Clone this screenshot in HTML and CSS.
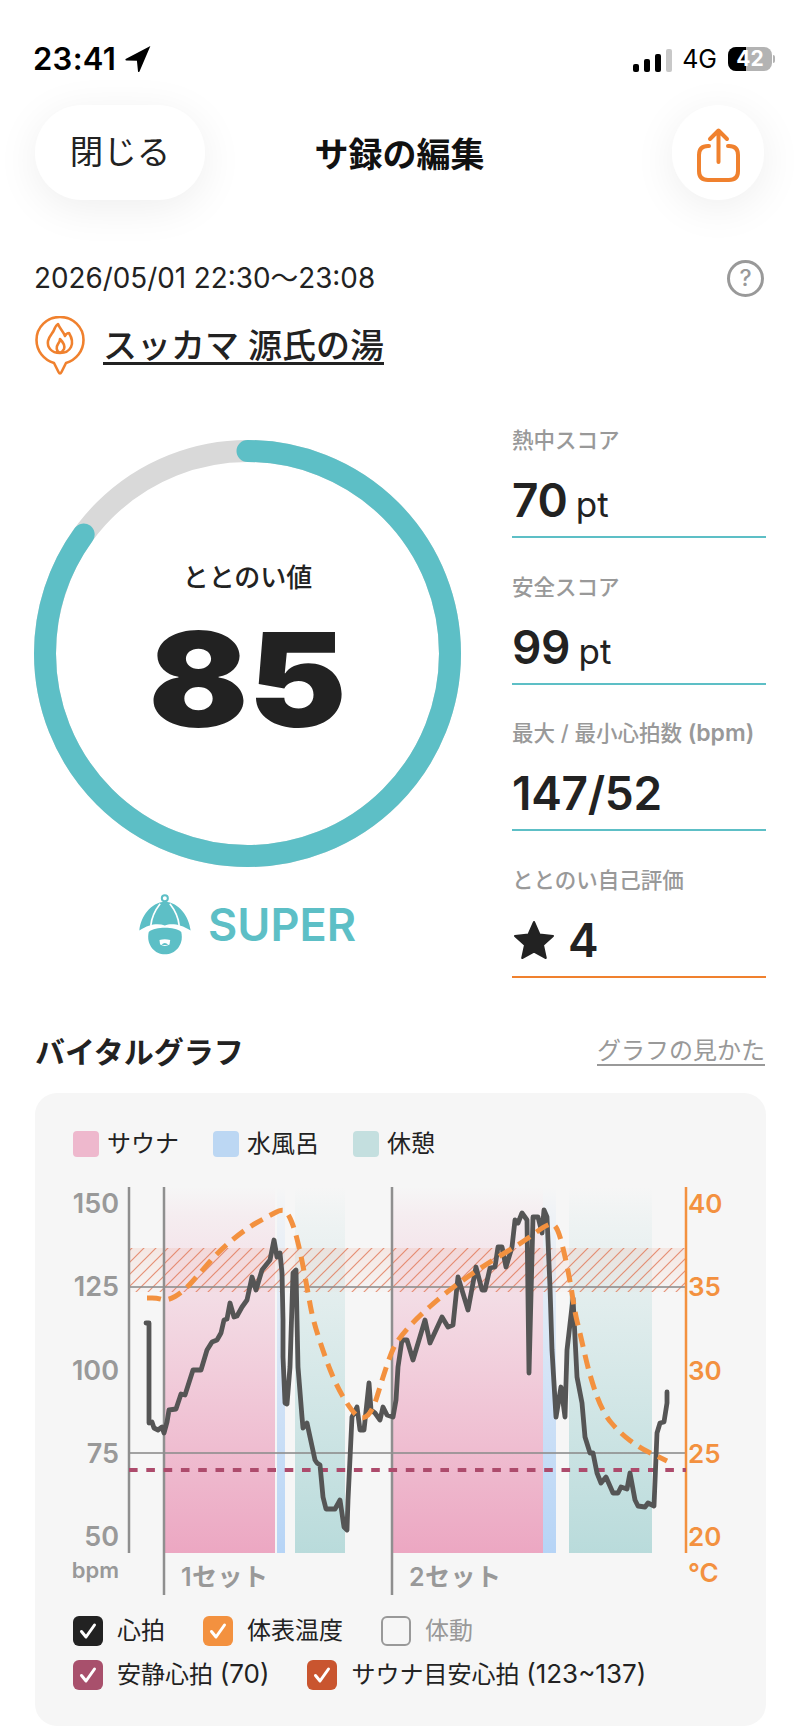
FILE: index.html
```html
<!DOCTYPE html>
<html lang="ja">
<head>
<meta charset="utf-8">
<title>サ録の編集</title>
<link rel="stylesheet" href="styles.css">
</head>
<body>
<div class="page">
  <div class="status">
    <div class="status-left">
      <span class="time">23:41</span>
      <svg class="loc" width="28" height="28" viewBox="0 0 26 26"><path class="fill-ink" d="M24.5 1 L1.5 13 Q0.8 14 2 14.4 L12 14.6 L13 24.6 Q13.6 25.6 14.4 24.6 Z"/></svg>
    </div>
    <div class="status-right">
      <span class="bars"><i class="bar b1"></i><i class="bar b2"></i><i class="bar b3"></i><i class="bar b4"></i></span>
      <span class="net">4G</span>
      <span class="battery"><span class="battery-fill"></span><span class="battery-num">42</span></span>
      <span class="nub"></span>
    </div>
  </div>

  <div class="nav">
    <div class="close-btn">閉じる</div>
    <div class="nav-title">サ録の編集</div>
    <div class="share-btn">
      <svg width="92" height="94" viewBox="0 0 92 94"><path class="stroke-orange" d="M37 41 H36 Q27 41 27 50 V66 Q27 75 36 75 H57 Q66 75 66 66 V50 Q66 41 57 41 H56"/><path class="stroke-orange" d="M46.500 57 V26 M38 34 L46.500 25.500 L55 34"/></svg>
    </div>
  </div>

  <div class="date-row">
    <span class="date">2026/05/01 22:30〜23:08</span>
    <span class="help">?</span>
  </div>

  <div class="venue-row">
    <svg width="50" height="60" viewBox="15 16 50 60"><path class="stroke-pin" d="M34 63 C24 60 16.500 51 16.500 40 C16.500 27 27 17 40 17 C53 17 63.500 27 63.500 40 C63.500 51 56 60 46 63 L41.500 72 Q40 75 38.500 72 Z"/><path class="stroke-pin" d="M40 53 C31 53 27 47 28 41 C29 36 33 33 34 30 C35 28 35 26 38 24 C40 29 43 31 45 36 C46 34 47 33 49 33 C52 38 53 43 51 47 C49 51 45 53 40 53 C36 51 36 47 38 44 C39 43 40 41 40 39 C43 42 45 46 44 49 C43 51 42 52 40 53 Z"/></svg>
    <span class="venue">スッカマ 源氏の湯</span>
  </div>

  <div class="score">
    <div class="score-left">
      <div class="ring">
        <svg class="ring-svg" width="427" height="427" viewBox="0 0 427 427">
          <circle class="ring-bg" cx="213.500" cy="213.500" r="202.500"/>
          <circle class="ring-fg" cx="213.500" cy="213.500" r="202.500" pathLength="100" stroke-dasharray="85 100" transform="rotate(-90 213.500 213.500)"/>
        </svg>
        <div class="ring-text">
          <div class="ring-label">ととのい値</div>
          <div class="ring-value">85</div>
        </div>
      </div>
      <div class="level">
        <svg width="56" height="62" viewBox="50 30 165 185">
          <circle class="knob" cx="132" cy="46" r="9"/>
          <path class="fill-teal" d="M56 142 C60 100 90 58 132 56 C175 58 204 100 209 142 C178 122 150 120 132 127 C112 120 86 122 56 142 Z"/>
          <path class="stroke-white" d="M118 62 C100 85 92 105 90 128 M147 62 C165 85 173 105 175 128"/>
          <path class="fill-teal" d="M84 146 C105 130 160 130 181 146 C190 185 162 213 132 213 C103 213 75 185 84 146 Z"/>
          <path class="fill-white" d="M116 170 Q132 166 148 170 L146 184 Q132 192 118 184 Z"/>
          <path class="fill-teal" d="M122 184 Q132 174 142 184 Q132 187 122 184 Z"/>
        </svg>
        <span class="level-text">SUPER</span>
      </div>
    </div>
    <div class="stats">
      <div class="stat">
        <div class="stat-label">熱中スコア</div>
        <div class="stat-value">70 <span class="unit">pt</span></div>
      </div>
      <div class="stat">
        <div class="stat-label">安全スコア</div>
        <div class="stat-value">99 <span class="unit">pt</span></div>
      </div>
      <div class="stat">
        <div class="stat-label">最大 / 最小心拍数 <span class="stat-label-latin">(bpm)</span></div>
        <div class="stat-value">147/52</div>
      </div>
      <div class="stat stat-self">
        <div class="stat-label">ととのい自己評価</div>
        <div class="stat-value stat-star">
          <svg width="44" height="42" viewBox="0 0 44 42"><path class="fill-ink star" d="M22 3 L27.500 15.500 L41 17 L31 26 L33.800 39 L22 32.500 L10.200 39 L13 26 L3 17 L16.500 15.500 Z"/></svg>
          <span>4</span>
        </div>
      </div>
    </div>
  </div>

  <div class="graph-head">
    <h2 class="graph-title">バイタルグラフ</h2>
    <span class="graph-link">グラフの見かた</span>
  </div>

  <div class="card">
    <div class="legend">
      <span class="legend-item"><i class="swatch sw-sauna"></i>サウナ</span>
      <span class="legend-item"><i class="swatch sw-water"></i>水風呂</span>
      <span class="legend-item"><i class="swatch sw-rest"></i>休憩</span>
    </div>

    <svg class="chart" width="731" height="440" viewBox="35 1170 731 440">
      <defs>
        <linearGradient id="gSauna" x1="0" y1="0" x2="0" y2="1"><stop offset="0" stop-color="#eda9c3" stop-opacity="0"/><stop offset="0.08" stop-color="#eda9c3" stop-opacity="0.12"/><stop offset="1" stop-color="#eca7c2"/></linearGradient>
        <linearGradient id="gWater" x1="0" y1="0" x2="0" y2="1"><stop offset="0" stop-color="#b6d4f6" stop-opacity="0"/><stop offset="0.08" stop-color="#b6d4f6" stop-opacity="0.12"/><stop offset="1" stop-color="#b6d4f6"/></linearGradient>
        <linearGradient id="gRest" x1="0" y1="0" x2="0" y2="1"><stop offset="0" stop-color="#bbdcdc" stop-opacity="0"/><stop offset="0.1" stop-color="#bbdcdc" stop-opacity="0.14"/><stop offset="1" stop-color="#b9dbdb"/></linearGradient>
        <linearGradient id="gZone" x1="0" y1="0" x2="0" y2="1"><stop offset="0" stop-color="#e98a6c" stop-opacity="0.14"/><stop offset="1" stop-color="#e98a6c" stop-opacity="0.02"/></linearGradient>
        <pattern id="hatch" patternUnits="userSpaceOnUse" width="12" height="12"><path class="hatch-line" d="M-3 15 L15 -3 M-3 3 L3 -3 M9 15 L15 9"/></pattern>
      </defs>

      <rect class="band" x="165" y="1187" width="110" height="366" fill="url(#gSauna)"/>
      <rect class="band" x="277" y="1187" width="8" height="366" fill="url(#gWater)"/>
      <rect class="band" x="295" y="1187" width="50" height="366" fill="url(#gRest)"/>
      <rect class="band" x="393" y="1187" width="150" height="366" fill="url(#gSauna)"/>
      <rect class="band" x="543" y="1187" width="13" height="366" fill="url(#gWater)"/>
      <rect class="band" x="569" y="1187" width="83" height="366" fill="url(#gRest)"/>

      <rect x="129" y="1248" width="557" height="44" fill="url(#gZone)"/>
      <rect x="129" y="1248" width="557" height="44" fill="url(#hatch)"/>

      <path class="grid" d="M129 1287 H686 M129 1453 H686"/>
      <path class="axis" d="M129 1187 V1553 M164 1187 V1595 M392 1187 V1595"/>
      <path class="axis-right" d="M686 1187 V1553"/>
      <path class="rest-line" d="M129 1470 H686"/>

      <polyline class="heart" points="146,1323 149,1323 149,1415 149,1423 152,1422 154,1428 158,1430 162,1427 164,1433 167,1422 169,1410 176,1409 181,1394 185,1395 193,1370 201,1370 207,1350 212,1342 217,1340 221,1333 224,1320 227,1319 230,1303 234,1317 237,1316 242,1307 247,1300 252,1277 256,1290 262,1270 270,1260 274,1240 277,1257 280,1253 282,1273 283,1320 283,1357 285,1403 287,1404 290,1367 293,1273 296,1270 297,1320 298,1367 302,1417 303,1428 307,1423 315,1460 317,1463 320,1465 323,1497 326,1509 335,1509 340,1500 344,1527 347,1530 348,1500 352,1417 357,1407 360,1430 364,1430 369,1383 371,1410 375,1413 380,1420 383,1407 387,1415 393,1417 396,1400 398,1367 402,1340 407,1340 413,1360 425,1320 430,1343 442,1317 448,1327 453,1325 458,1277 468,1310 476,1267 482,1290 485,1290 490,1268 495,1267 498,1247 502,1247 506,1267 512,1247 515,1220 518,1223 522,1213 527,1220 529,1373 533,1217 538,1217 542,1233 544,1210 547,1217 550,1287 552,1350 556,1417 561,1387 565,1417 567,1350 573,1298 577,1377 582,1403 585,1437 590,1453 593,1453 597,1473 601,1483 606,1477 613,1493 618,1493 621,1487 627,1489 630,1473 635,1500 638,1506 645,1507 648,1503 654,1506 657,1433 660,1423 664,1422 667,1403 667,1392"/>
      <path class="temp" d="M147 1298 L152 1298 Q157 1298 162 1299.5 Q167 1301 175 1296.5 Q183 1292 191.5 1282.5 Q200 1273 210 1261.5 Q220 1250 233.5 1239 Q247 1228 257 1222.5 Q267 1217 274.5 1213 Q282 1209 285 1211 Q288 1213 291.5 1221.5 Q295 1230 298.5 1245 Q302 1260 305 1276.5 Q308 1293 310.5 1306.5 Q313 1320 319 1338.5 Q325 1357 331 1372 Q337 1387 345 1400 Q353 1413 358 1416.5 Q363 1420 368 1415 Q373 1410 377.5 1395 Q382 1380 387 1365 Q392 1350 396 1343.5 Q400 1337 408.5 1327.5 Q417 1318 430 1306.5 Q443 1295 455 1286 Q467 1277 480 1268.5 Q493 1260 508 1251 Q523 1242 536.5 1232 Q550 1222 553.5 1224.5 Q557 1227 560 1237 Q563 1247 566.5 1263.5 Q570 1280 572.5 1296.5 Q575 1313 577.5 1323 Q580 1333 585 1355 Q590 1377 596.5 1395 Q603 1413 611.5 1423 Q620 1433 630 1440.5 Q640 1448 648.5 1452 Q657 1456 667 1461"/>

      <g class="ticks-left">
        <text x="119" y="1213">150</text>
        <text x="119" y="1296">125</text>
        <text x="119" y="1380">100</text>
        <text x="119" y="1463">75</text>
        <text x="119" y="1546">50</text>
        <text class="bpm" x="119" y="1578">bpm</text>
      </g>
      <g class="ticks-right">
        <text x="688" y="1213">40</text>
        <text x="688" y="1296">35</text>
        <text x="688" y="1380">30</text>
        <text x="688" y="1463">25</text>
        <text x="688" y="1546">20</text>
        <text x="688" y="1582">°C</text>
      </g>
      <g class="set-labels">
        <text x="181" y="1586">1セット</text>
        <text x="409" y="1586">2セット</text>
      </g>
    </svg>

    <div class="checks">
      <div class="check-row">
        <span class="check"><span class="box box-ink"><svg width="30" height="30" viewBox="0 0 30 30"><path class="tick" d="M8.500 15.500 L13 21 L21.500 9"/></svg></span>心拍</span>
        <span class="check"><span class="box box-orange"><svg width="30" height="30" viewBox="0 0 30 30"><path class="tick" d="M8.500 15.500 L13 21 L21.500 9"/></svg></span>体表温度</span>
        <span class="check check-off"><span class="box box-off"></span>体動</span>
      </div>
      <div class="check-row">
        <span class="check"><span class="box box-rose"><svg width="30" height="30" viewBox="0 0 30 30"><path class="tick" d="M8.500 15.500 L13 21 L21.500 9"/></svg></span><span>安静心拍 <span class="latin">(70)</span></span></span>
        <span class="check"><span class="box box-red"><svg width="30" height="30" viewBox="0 0 30 30"><path class="tick" d="M8.500 15.500 L13 21 L21.500 9"/></svg></span><span>サウナ目安心拍 <span class="latin">(123~137)</span></span></span>
      </div>
    </div>
  </div>
</div>
</body>
</html>
```

FILE: styles.css
```css
* { box-sizing: border-box; }
html, body { margin: 0; padding: 0; background: #fff; }
body {
  font-family: Inter, "Noto Sans CJK JP", sans-serif;
  color: #222;
}
.page { width: 800px; height: 1732px; overflow: hidden; display: flex; flex-direction: column; }

/* status bar */
.status { height: 105px; padding: 44px 25px 0 33px; display: flex; justify-content: space-between; align-items: flex-start; }
.status-left, .status-right { display: flex; align-items: center; height: 30px; }
.time { font-size: 31px; font-weight: 600; color: #000; letter-spacing: 0.3px; line-height: 30px; }
.loc { margin-left: 8px; }
.fill-ink { fill: #000; }
.bars { display: flex; align-items: flex-end; gap: 5px; height: 23px; margin-right: 10px; margin-top: 3px; }
.bar { display: block; width: 6px; background: #000; border-radius: 2px; }
.b1 { height: 8px; }
.b2 { height: 13px; }
.b3 { height: 18px; }
.b4 { height: 23px; background: #c8c8c8; }
.net { font-size: 25px; font-weight: 400; color: #000; line-height: 30px; margin-right: 11px; }
.battery { position: relative; width: 44px; height: 24px; border-radius: 8px; background: #b3b3b3; overflow: hidden; display: block; }
.battery-fill { position: absolute; left: 0; top: 0; bottom: 0; width: 18px; background: #000; }
.battery-num { position: absolute; left: 0; right: 0; top: 0; text-align: center; color: #fff; font-size: 21px; font-weight: 700; line-height: 24px; }
.nub { display: block; width: 2px; height: 8px; background: #b3b3b3; margin-left: 1px; border-radius: 0 2px 2px 0; }

/* nav */
.nav { height: 95px; padding: 0 36px 0 35px; display: grid; grid-template-columns: 1fr auto 1fr; align-items: center; }
.close-btn { width: 170px; height: 95px; border-radius: 47px; background: #fff; box-shadow: 0 8px 44px rgba(0,0,0,.07); font-size: 33.500px; line-height: 95px; text-align: center; color: #222; }
.nav-title { font-size: 34px; font-weight: 700; color: #111; }
.share-btn { justify-self: end; width: 92px; height: 95px; border-radius: 47px; background: #fff; box-shadow: 0 8px 44px rgba(0,0,0,.07); }
.stroke-orange { fill: none; stroke: #f0812e; stroke-width: 4; stroke-linecap: round; stroke-linejoin: round; }

/* date */
.date-row { margin-top: 60px; height: 36px; padding: 0 36px 0 35px; display: flex; justify-content: space-between; align-items: center; }
.date { font-size: 27.800px; line-height: 36px; color: #222; margin-left: -1px; }
.help { width: 37px; height: 37px; border: 3px solid #999; border-radius: 50%; color: #999; font-size: 23px; font-weight: 500; line-height: 31px; text-align: center; }

/* venue */
.venue-row { margin-top: 20px; height: 59px; padding-left: 35px; display: flex; align-items: flex-start; gap: 18px; }
.stroke-pin { fill: none; stroke: #f0812e; stroke-width: 2.6; stroke-linejoin: round; }
.venue { font-size: 34px; font-weight: 500; line-height: 40px; margin-top: 10px; color: #222; border-bottom: 3px solid #222; height: 39px; }

/* score */
.score { margin-top: 50px; padding-left: 34px; display: flex; }
.score-left { width: 478px; padding-top: 15px; }
.ring { position: relative; width: 427px; height: 427px; }
.ring-svg { display: block; }
.ring-bg, .ring-fg { fill: none; stroke-width: 22; }
.ring-bg { stroke: #d9d9d9; }
.ring-fg { stroke: #5dbfc6; stroke-linecap: round; }
.ring-text { position: absolute; left: 0; right: 0; top: 120px; text-align: center; }
.ring-label { font-size: 26px; font-weight: 500; line-height: 36px; color: #222; }
.ring-value { font-size: 131px; font-weight: 900; line-height: 130px; margin-top: 19px; color: #222; transform: scaleX(1.125); }
.level { margin-top: 26px; height: 62px; margin-left: 103px; display: flex; align-items: center; gap: 15px; color: #5dbfc6; }
.level-text { font-size: 45px; font-weight: 600; }
.fill-teal { fill: #5dbfc6; }
.fill-white { fill: #fff; }
.knob { fill: none; stroke: #5dbfc6; stroke-width: 6; }
.stroke-white { fill: none; stroke: #fff; stroke-width: 5; }

.stats { width: 254px; display: flex; flex-direction: column; gap: 33.600px; }
.stat { border-bottom: 2px solid #5dbfc6; padding-bottom: 9px; }
.stat-self { border-bottom-color: #f0812e; }
.stat-label { font-size: 21.500px; font-weight: 500; line-height: 30px; color: #999; white-space: nowrap; }
.stat-label-latin { font-size: 23px; font-weight: 600; }
.stat-value { margin-top: 18px; height: 54px; font-size: 46px; font-weight: 600; line-height: 54px; color: #222; white-space: nowrap; letter-spacing: -0.3px; word-spacing: -3px; }
.unit { font-size: 35px; font-weight: 400; letter-spacing: 0; }
.stat-star { display: flex; align-items: center; gap: 12px; }
.star { stroke: #222; stroke-width: 2; stroke-linejoin: round; fill: #222; }

/* graph head */
.graph-head { margin-top: 56px; height: 36px; padding: 0 35px; display: flex; justify-content: space-between; align-items: center; }
.graph-title { margin: 0; font-size: 30px; font-weight: 700; color: #222; line-height: 36px; }
.graph-link { font-size: 24px; color: #999; line-height: 26px; border-bottom: 2px solid #999; }

/* card */
.card { margin: 23px 34px 0 35px; height: 633px; padding: 38px 0 0; border-radius: 22px; background: #f6f6f6; }
.legend { display: flex; padding-left: 38px; height: 26px; gap: 34px; }
.legend-item { display: flex; align-items: center; gap: 8px; font-size: 24px; line-height: 26px; color: #222; }
.swatch { display: block; width: 26px; height: 26px; border-radius: 4px; }
.sw-sauna { background: #eeb8cd; }
.sw-water { background: #bcd7f3; }
.sw-rest { background: #c4dfdf; }

.chart { display: block; margin-top: 13px; }
.band { stroke: none; }
.hatch-line { stroke: #e0714f; stroke-width: 1.200; opacity: .75; fill: none; }
.grid { stroke: #8d8d8d; stroke-width: 2; fill: none; opacity: .8; }
.axis { stroke: #8f8f8f; stroke-width: 2.5; fill: none; }
.axis-right { stroke: #f3913f; stroke-width: 2.5; fill: none; }
.rest-line { stroke: #ad4b6c; stroke-width: 4; stroke-dasharray: 8.600 8.700; fill: none; }
.heart { fill: none; stroke: #555; stroke-width: 4.800; stroke-linejoin: round; stroke-linecap: round; }
.temp { fill: none; stroke: #f3913f; stroke-width: 5; stroke-dasharray: 14 8; }
.ticks-left text { font-size: 27px; font-weight: 600; fill: #999; text-anchor: end; }
.ticks-left .bpm { font-size: 22px; }
.ticks-right text { font-size: 26px; font-weight: 600; fill: #f3913f; }
.set-labels text { font-size: 25px; font-weight: 600; fill: #999; letter-spacing: 0.5px; }

.checks { margin-top: 6px; padding-left: 38px; display: flex; flex-direction: column; gap: 14px; }
.check-row { display: flex; gap: 38px; height: 30px; }
.check { display: flex; align-items: center; gap: 14px; font-size: 24px; line-height: 30px; color: #222; white-space: nowrap; }
.check-off { color: #999; }
.latin { font-size: 26px; }
.box { display: block; width: 30px; height: 30px; border-radius: 6px; }
.box svg { display: block; }
.box-ink { background: #222; }
.box-orange { background: #f3913f; }
.box-rose { background: #a8506c; }
.box-red { background: #c9552f; }
.box-off { border: 2.500px solid #999; }
.tick { fill: none; stroke: #fff; stroke-width: 3; stroke-linecap: round; stroke-linejoin: round; }
```
